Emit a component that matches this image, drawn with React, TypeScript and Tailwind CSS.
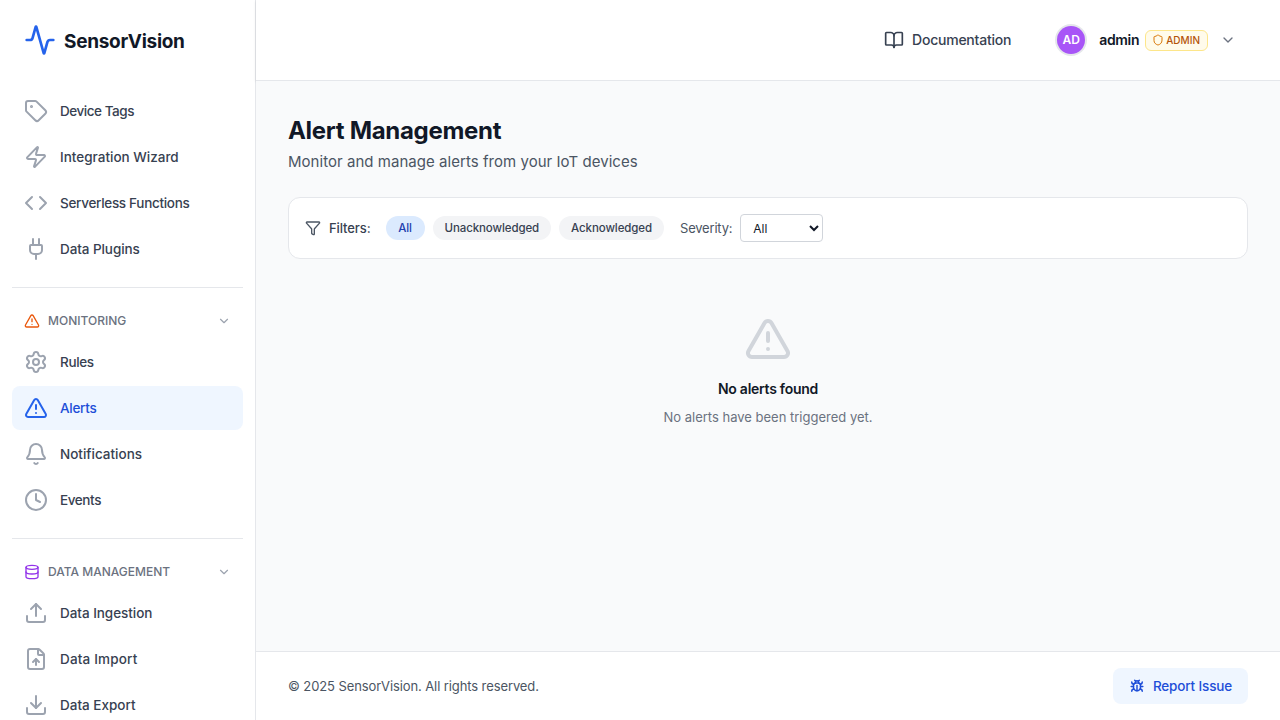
import {
    Activity,
    BookOpen,
    Bell,
    Bug,
    ChevronDown,
    Clock,
    Code,
    Database,
    Download,
    FileUp,
    Filter,
    Plug,
    Settings,
    Shield,
    Tag,
    TriangleAlert,
    Upload,
    Zap,
} from 'lucide-react';
import type { LucideIcon } from 'lucide-react';

function NavItem({ icon: Icon, label, tracking, active }: { icon: LucideIcon; label: string; tracking: string; active?: boolean }) {
    return (
        <div className={`flex h-11 items-center gap-3 rounded-lg px-3 text-[13.5px] font-medium ${active ? 'bg-[#eff6ff] text-[#1d4ed8]' : 'text-[#374151]'}`}>
            <Icon className={`h-6 w-6 shrink-0 ${active ? 'text-[#2563eb]' : 'text-[#9ca3af]'}`} />
            <span className={tracking}>{label}</span>
        </div>
    );
}

function SectionHeader({ icon: Icon, label, color }: { icon: LucideIcon; label: string; color: string }) {
    return (
        <div className="flex h-[20px] items-center justify-between px-3">
            <div className="flex items-center gap-2">
                <Icon className={`h-4 w-4 ${color}`} />
                <span className="text-xs font-medium text-[#6b7280] uppercase">{label}</span>
            </div>
            <ChevronDown className="h-3.5 w-3.5 text-[#9ca3af]" />
        </div>
    );
}

function Sidebar() {
    return (
        <aside className="flex h-[720px] w-[256px] shrink-0 flex-col overflow-hidden border-r border-[#e5e7eb] bg-white">
            <div className="flex h-[80px] shrink-0 items-center gap-2 pl-6">
                <Activity className="h-8 w-8 text-[#2563eb]" />
                <span className="mt-1 text-[19px] font-bold tracking-[-0.3px] text-[#111827]">SensorVision</span>
            </div>
            <nav className="flex flex-col px-3 pt-[9px]">
                <div className="flex flex-col gap-0.5">
                    <NavItem icon={Tag} label="Device Tags" tracking="tracking-[-0.45px]" />
                    <NavItem icon={Zap} label="Integration Wizard" tracking="tracking-[0px]" />
                    <NavItem icon={Code} label="Serverless Functions" tracking="tracking-[-0.3px]" />
                    <NavItem icon={Plug} label="Data Plugins" tracking="tracking-[-0.08px]" />
                </div>
                <div className="mt-4 border-t border-[#e5e7eb] pt-[23px]">
                    <SectionHeader icon={TriangleAlert} label="Monitoring" color="text-[#ea580c]" />
                    <div className="mt-[9px] flex flex-col gap-0.5">
                        <NavItem icon={Settings} label="Rules" tracking="tracking-[-0.34px]" />
                        <NavItem icon={TriangleAlert} label="Alerts" tracking="tracking-[-0.27px]" active />
                        <NavItem icon={Bell} label="Notifications" tracking="tracking-[0px]" />
                        <NavItem icon={Clock} label="Events" tracking="tracking-[-0.4px]" />
                    </div>
                </div>
                <div className="mt-4 border-t border-[#e5e7eb] pt-[23px]">
                    <SectionHeader icon={Database} label="Data Management" color="text-[#9333ea]" />
                    <div className="mt-[9px] flex flex-col gap-0.5">
                        <NavItem icon={Upload} label="Data Ingestion" tracking="tracking-[-0.04px]" />
                        <NavItem icon={FileUp} label="Data Import" tracking="tracking-[0.18px]" />
                        <NavItem icon={Download} label="Data Export" tracking="tracking-[0px]" />
                    </div>
                </div>
            </nav>
        </aside>
    );
}

function Header() {
    return (
        <header className="flex h-[81px] shrink-0 items-center justify-end border-b border-[#e5e7eb] bg-white pr-[44px] shadow-sm">
            <div className="flex items-center gap-2 text-sm font-medium text-[#374151]">
                <BookOpen className="h-5 w-5 text-[#374151]" />
                <span className="tracking-[-0.23px]">Documentation</span>
            </div>
            <div className="ml-[46px] flex items-center">
                <div className="flex h-7 w-7 items-center justify-center rounded-full bg-[#a855f7] text-xs font-semibold text-white ring-2 ring-[#e5e7eb]">AD</div>
                <span className="ml-[14px] text-sm font-semibold tracking-[-0.3px] text-[#111827]">admin</span>
                <span className="ml-1.5 flex h-[21px] items-center gap-0.5 rounded-md border border-[#fde68a] bg-[#fffbeb] pr-[7px] pl-[6px] text-[10px] font-medium text-[#b45309]">
                    <Shield className="h-3 w-3 text-[#d97706]" />
                    ADMIN
                </span>
                <ChevronDown className="ml-3 h-4 w-4 text-[#6b7280]" />
            </div>
        </header>
    );
}

function Pill({ label, active }: { label: string; active?: boolean }) {
    return (
        <span className={`flex h-6 items-center justify-center rounded-full px-3 pt-px text-[11.5px] font-medium tracking-[-0.1px] ${active ? 'w-[39px] bg-[#dbeafe] text-[#1e40af]' : 'bg-[#f3f4f6] text-[#374151]'}`}>{label}</span>
    );
}

function FilterBar() {
    return (
        <div className="mt-[23px] flex h-[62px] items-center rounded-xl border border-[#e5e7eb] bg-white px-4">
            <Filter className="h-4 w-4 text-[#4b5563]" />
            <span className="ml-2 pt-px text-[13px] font-medium tracking-[-0.1px] text-[#374151]">Filters:</span>
            <div className="ml-[15px] flex items-center gap-2">
                <Pill label="All" active />
                <Pill label="Unacknowledged" />
                <Pill label="Acknowledged" />
            </div>
            <span className="ml-4 pt-px text-[13px] tracking-[-0.2px] text-[#4b5563]">Severity:</span>
            <select className="ml-2 h-[28px] w-[83px] rounded border border-[#d1d5db] bg-white pl-2 text-xs text-[#111827]" defaultValue="All">
                <option>All</option>
            </select>
        </div>
    );
}

export default function App() {
    return (
        <div className="flex h-[720px] w-[1280px] overflow-hidden bg-white font-['Inter',sans-serif]">
            <Sidebar />
            <div className="flex min-w-0 flex-1 flex-col">
                <Header />
                <main className="flex-1 bg-[#f9fafb] px-8 pt-[34px]">
                    <h1 className="text-2xl font-bold tracking-[-0.3px] text-[#111827]">Alert Management</h1>
                    <p className="mt-[3px] text-[15px] leading-6 tracking-[0.04px] text-[#4b5563]">Monitor and manage alerts from your IoT devices</p>
                    <FilterBar />
                    <div className="mt-[56px] flex flex-col items-center">
                        <TriangleAlert className="h-12 w-12 text-[#d1d5db]" />
                        <h3 className="mt-4 text-sm font-semibold tracking-[-0.27px] text-[#111827]">No alerts found</h3>
                        <p className="mt-2 text-[13px] leading-5 text-[#6b7280]">No alerts have been triggered yet.</p>
                    </div>
                </main>
                <footer className="flex h-[69px] shrink-0 items-center justify-between border-t border-[#e5e7eb] bg-white px-8">
                    <span className="pt-px text-[13px] tracking-[-0.1px] text-[#4b5563]">© 2025 SensorVision. All rights reserved.</span>
                    <span className="flex h-9 items-center gap-[9px] rounded-lg bg-[#eff6ff] pr-4 pl-[17px] text-[13.5px] font-medium tracking-[-0.15px] text-[#1d4ed8]">
                        <Bug className="h-3.5 w-3.5" strokeWidth={2.5} />
                        Report Issue
                    </span>
                </footer>
            </div>
        </div>
    );
}
